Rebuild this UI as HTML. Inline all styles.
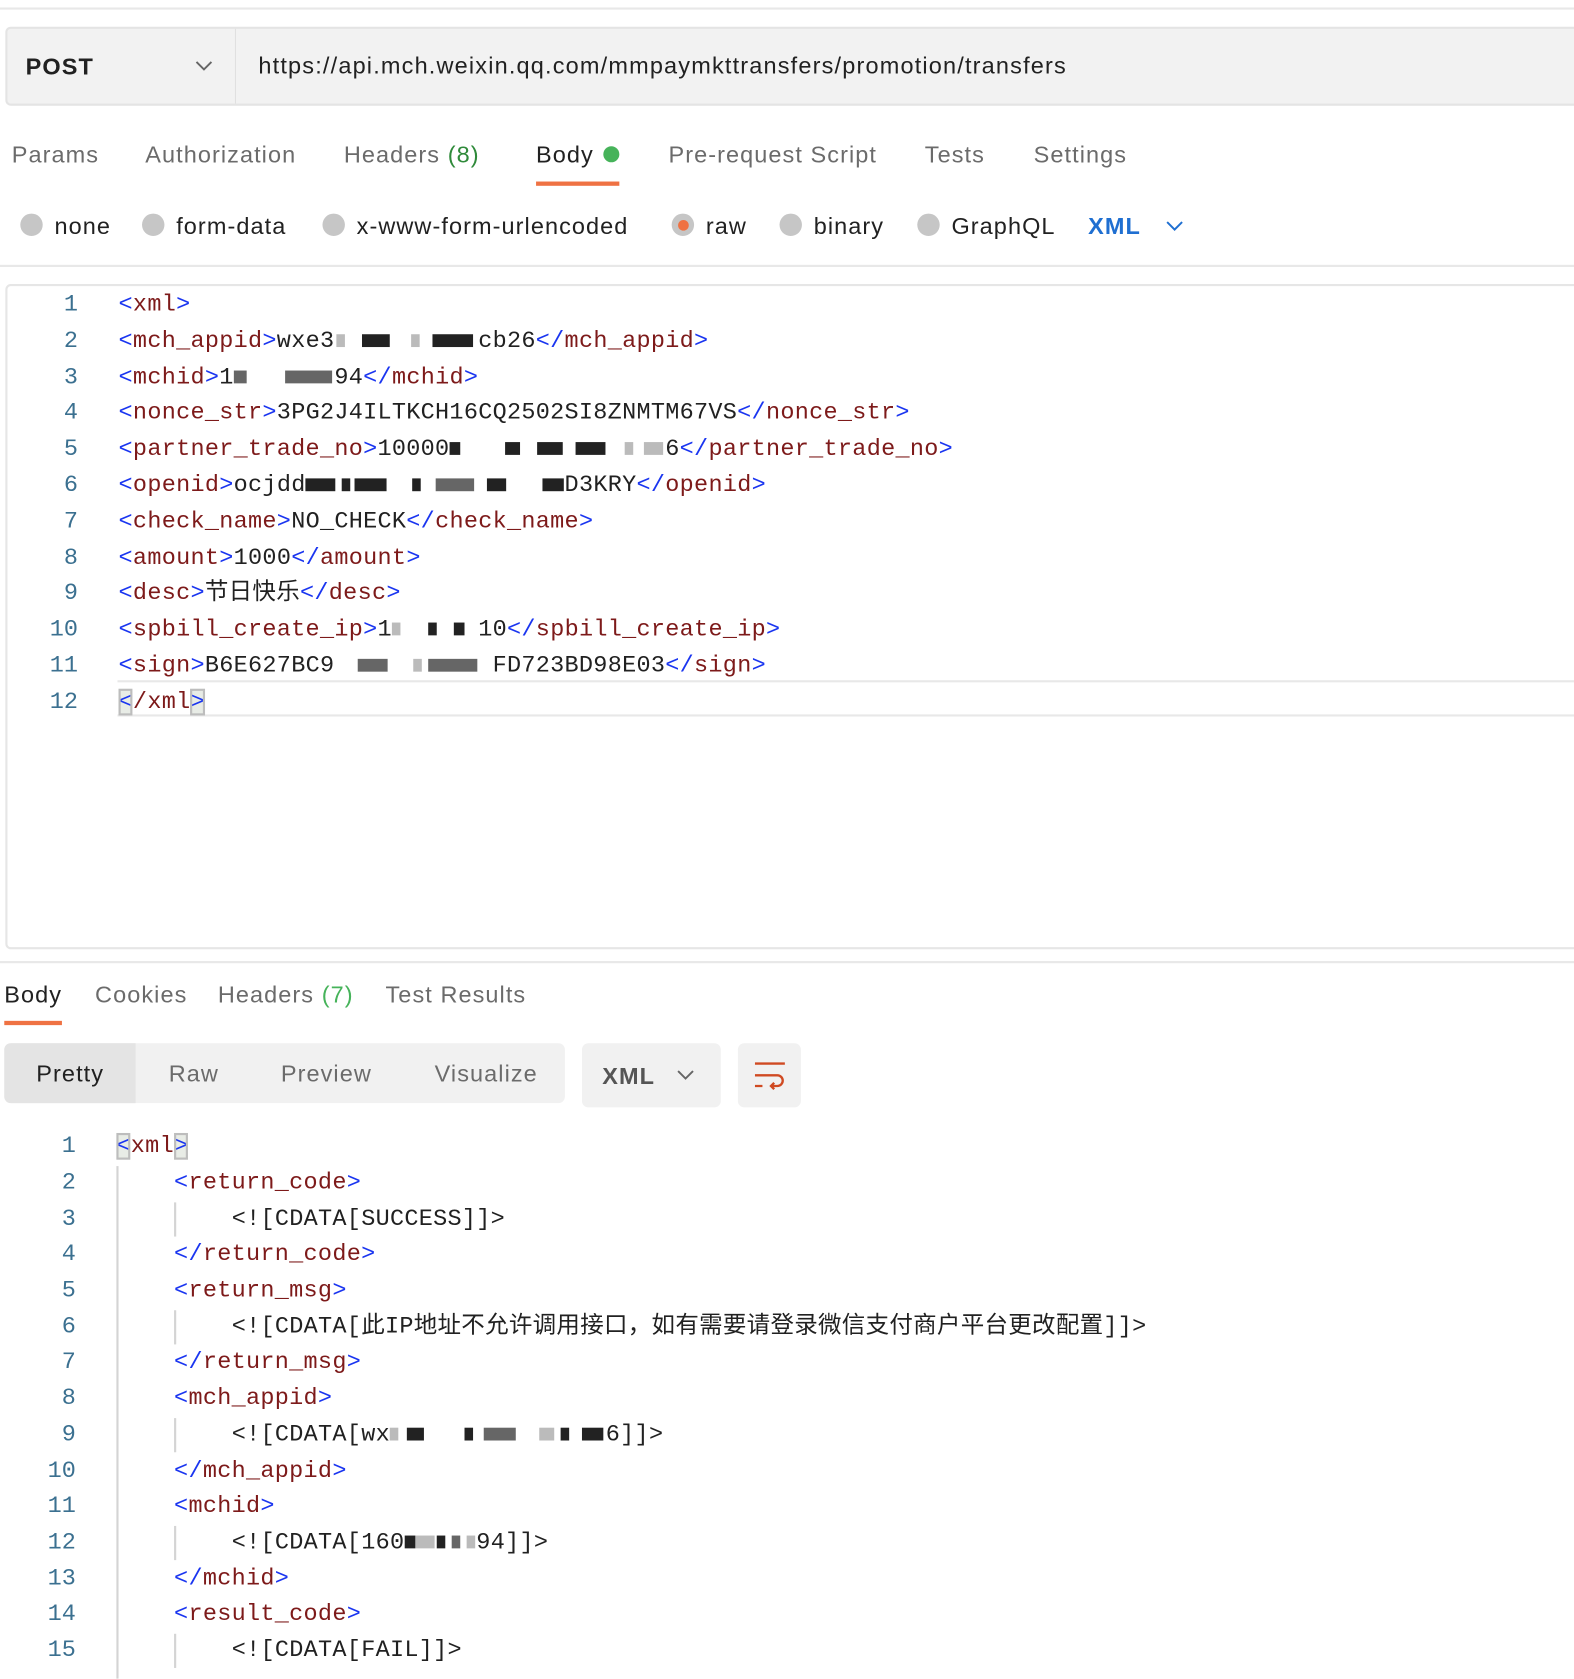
<!DOCTYPE html>
<html><head><meta charset="utf-8">
<style>
*{margin:0;padding:0;box-sizing:border-box}
html,body{width:1574px;height:1676px;overflow:hidden;background:#fff}
#w{position:absolute;left:0;top:0;width:1474px;height:1569px;transform:scale(1.06784);transform-origin:0 0;font-family:"Liberation Sans","Noto Sans CJK SC",sans-serif;color:#212121}
.a{position:absolute;white-space:nowrap}
.ui{font-size:22px;line-height:30px;letter-spacing:1px}
.g{color:#6b6b6b}
.m{font-family:"Liberation Mono","Noto Sans CJK SC",monospace;font-size:22px;line-height:34px;height:34px;letter-spacing:0.27px;white-space:pre}
.n{position:absolute;width:60px;text-align:right;color:#3b7090;font-family:"Liberation Mono",monospace;font-size:22px;line-height:34px}
.b{color:#1a35f0}.t{color:#7d1a1a}
.r{display:inline-block;width:21px;height:21px;border-radius:50%;background:#c6c6c6;position:absolute}
.q{position:relative;display:inline-block}
.q i{position:absolute;top:10px;height:12px;background:#222}
.q i.l{background:#bbb}.q i.d{background:#666}
.hl{background:#e8ece6;outline:2px solid #bdbdbd;outline-offset:-2px}
</style></head><body><div id="w">
<div class="a" style="left:0;top:7px;width:1474px;height:2px;background:#e8e8e8"></div>
<div class="a" style="left:5px;top:25px;width:1480px;height:74px;background:#f2f2f2;border:2px solid #e4e4e4;border-radius:5px"></div>
<div class="a" style="left:220px;top:27px;width:1px;height:70px;background:#e0e0e0"></div>
<div class="a ui" style="left:24px;top:48px;font-weight:bold">POST</div>
<svg class="a" style="left:182px;top:56px" width="18" height="12"><path d="M2 2 L9 9 L16 2" stroke="#666" stroke-width="1.8" fill="none"/></svg>
<div class="a ui" style="left:242px;top:47px;letter-spacing:1.1px">https://api.mch.weixin.qq.com/mmpaymkttransfers/promotion/transfers</div>

<div class="a ui g" style="left:11px;top:130px">Params</div>
<div class="a ui g" style="left:136px;top:130px">Authorization</div>
<div class="a ui g" style="left:322px;top:130px">Headers <span style="color:#2f8a3a">(8)</span></div>
<div class="a ui" style="left:502px;top:130px">Body</div>
<div class="a" style="left:565px;top:137px;width:15px;height:15px;border-radius:50%;background:#46b35a"></div>
<div class="a ui g" style="left:626px;top:130px">Pre-request Script</div>
<div class="a ui g" style="left:866px;top:130px">Tests</div>
<div class="a ui g" style="left:968px;top:130px">Settings</div>
<div class="a" style="left:502px;top:170px;width:78px;height:4px;background:#ef7243"></div>

<span class="r" style="left:19px;top:200px"></span><div class="a ui" style="left:51px;top:197px">none</div>
<span class="r" style="left:133px;top:200px"></span><div class="a ui" style="left:165px;top:197px">form-data</div>
<span class="r" style="left:302px;top:200px"></span><div class="a ui" style="left:334px;top:197px">x-www-form-urlencoded</div>
<span class="r" style="left:629px;top:200px"></span><div class="a" style="left:635px;top:206px;width:10px;height:10px;border-radius:50%;background:#ef7243"></div><div class="a ui" style="left:661px;top:197px">raw</div>
<span class="r" style="left:730px;top:200px"></span><div class="a ui" style="left:762px;top:197px">binary</div>
<span class="r" style="left:859px;top:200px"></span><div class="a ui" style="left:891px;top:197px">GraphQL</div>
<div class="a ui" style="left:1019px;top:197px;color:#1f6fd1;font-weight:bold">XML</div>
<svg class="a" style="left:1091px;top:206px" width="18" height="12"><path d="M2 2 L9 9 L16 2" stroke="#1f6fd1" stroke-width="1.8" fill="none"/></svg>
<div class="a" style="left:0;top:248px;width:1474px;height:2px;background:#e8e8e8"></div>

<div class="a" style="left:5px;top:266px;width:1480px;height:623px;border:2px solid #e6e6e6;border-radius:5px"></div>
<div class="a" style="left:110px;top:637px;width:1370px;height:34px;border-top:2px solid #e8e8e8;border-bottom:2px solid #e8e8e8"></div>

<div class="n" style="left:13px;top:269px">1</div><div class="a m" style="left:111px;top:269px"><span class="b">&lt;</span><span class="t">xml</span><span class="b">&gt;</span></div>
<div class="n" style="left:13px;top:303px">2</div><div class="a m" style="left:111px;top:303px"><span class="b">&lt;</span><span class="t">mch_appid</span><span class="b">&gt;</span>wxe3<span class="q">          <i class="l" style="left:2px;width:8px"></i><i style="left:26px;width:26px"></i><i class="l" style="left:72px;width:8px"></i><i style="left:92px;width:38px"></i></span>cb26<span class="b">&lt;/</span><span class="t">mch_appid</span><span class="b">&gt;</span></div>
<div class="n" style="left:13px;top:337px">3</div><div class="a m" style="left:111px;top:337px"><span class="b">&lt;</span><span class="t">mchid</span><span class="b">&gt;</span>1<span class="q">       <i class="d" style="left:0;width:12px"></i><i class="d" style="left:48px;width:44px"></i></span>94<span class="b">&lt;/</span><span class="t">mchid</span><span class="b">&gt;</span></div>
<div class="n" style="left:13px;top:370px">4</div><div class="a m" style="left:111px;top:370px"><span class="b">&lt;</span><span class="t">nonce_str</span><span class="b">&gt;</span>3PG2J4ILTKCH16CQ2502SI8ZNMTM67VS<span class="b">&lt;/</span><span class="t">nonce_str</span><span class="b">&gt;</span></div>
<div class="n" style="left:13px;top:404px">5</div><div class="a m" style="left:111px;top:404px"><span class="b">&lt;</span><span class="t">partner_trade_no</span><span class="b">&gt;</span>10000<span class="q">               <i style="left:0;width:10px"></i><i style="left:52px;width:14px"></i><i style="left:82px;width:24px"></i><i style="left:118px;width:28px"></i><i class="l" style="left:164px;width:8px"></i><i class="l" style="left:182px;width:18px"></i></span>6<span class="b">&lt;/</span><span class="t">partner_trade_no</span><span class="b">&gt;</span></div>
<div class="n" style="left:13px;top:438px">6</div><div class="a m" style="left:111px;top:438px"><span class="b">&lt;</span><span class="t">openid</span><span class="b">&gt;</span>ocjdd<span class="q">                  <i style="left:0;width:28px"></i><i style="left:34px;width:8px"></i><i style="left:46px;width:30px"></i><i style="left:100px;width:8px"></i><i class="d" style="left:122px;width:36px"></i><i style="left:170px;width:18px"></i><i style="left:222px;width:20px"></i></span>D3KRY<span class="b">&lt;/</span><span class="t">openid</span><span class="b">&gt;</span></div>
<div class="n" style="left:13px;top:472px">7</div><div class="a m" style="left:111px;top:472px"><span class="b">&lt;</span><span class="t">check_name</span><span class="b">&gt;</span>NO_CHECK<span class="b">&lt;/</span><span class="t">check_name</span><span class="b">&gt;</span></div>
<div class="n" style="left:13px;top:506px">8</div><div class="a m" style="left:111px;top:506px"><span class="b">&lt;</span><span class="t">amount</span><span class="b">&gt;</span>1000<span class="b">&lt;/</span><span class="t">amount</span><span class="b">&gt;</span></div>
<div class="n" style="left:13px;top:539px">9</div><div class="a m" style="left:111px;top:539px"><span class="b">&lt;</span><span class="t">desc</span><span class="b">&gt;</span>节日快乐<span class="b">&lt;/</span><span class="t">desc</span><span class="b">&gt;</span></div>
<div class="n" style="left:13px;top:573px">10</div><div class="a m" style="left:111px;top:573px"><span class="b">&lt;</span><span class="t">spbill_create_ip</span><span class="b">&gt;</span>1<span class="q">      <i class="l" style="left:0;width:8px"></i><i style="left:34px;width:8px"></i><i style="left:58px;width:10px"></i></span>10<span class="b">&lt;/</span><span class="t">spbill_create_ip</span><span class="b">&gt;</span></div>
<div class="n" style="left:13px;top:607px">11</div><div class="a m" style="left:111px;top:607px"><span class="b">&lt;</span><span class="t">sign</span><span class="b">&gt;</span>B6E627BC9<span class="q">           <i class="d" style="left:22px;width:28px"></i><i class="l" style="left:74px;width:8px"></i><i class="d" style="left:88px;width:46px"></i></span>FD723BD98E03<span class="b">&lt;/</span><span class="t">sign</span><span class="b">&gt;</span></div>
<div class="n" style="left:13px;top:641px">12</div><div class="a m" style="left:111px;top:641px"><span class="b hl">&lt;</span><span class="t">/xml</span><span class="b hl">&gt;</span></div>

<div class="a" style="left:0;top:900px;width:1474px;height:2px;background:#e8e8e8"></div>
<div class="a ui" style="left:4px;top:917px">Body</div>
<div class="a ui g" style="left:89px;top:917px">Cookies</div>
<div class="a ui g" style="left:204px;top:917px">Headers <span style="color:#46b35a">(7)</span></div>
<div class="a ui g" style="left:361px;top:917px">Test Results</div>
<div class="a" style="left:4px;top:956px;width:54px;height:4px;background:#ef7243"></div>

<div class="a" style="left:4px;top:977px;width:525px;height:56px;background:#f1f1f1;border-radius:6px"></div>
<div class="a" style="left:4px;top:977px;width:123px;height:56px;background:#e4e4e4;border-radius:6px 0 0 6px"></div>
<div class="a ui" style="left:34px;top:991px">Pretty</div>
<div class="a ui g" style="left:158px;top:991px">Raw</div>
<div class="a ui g" style="left:263px;top:991px">Preview</div>
<div class="a ui g" style="left:407px;top:991px">Visualize</div>
<div class="a" style="left:545px;top:977px;width:130px;height:60px;background:#f1f1f1;border-radius:6px"></div>
<div class="a ui" style="left:564px;top:993px;font-weight:bold;color:#555">XML</div>
<svg class="a" style="left:633px;top:1001px" width="18" height="12"><path d="M2 2 L9 9 L16 2" stroke="#666" stroke-width="1.8" fill="none"/></svg>
<div class="a" style="left:691px;top:977px;width:59px;height:60px;background:#f1f1f1;border-radius:6px"></div>
<svg class="a" style="left:704px;top:991px" width="34" height="34"><path d="M3 5 H31 M3 16 H24 a5 5 0 0 1 0 10 H18 M21 23 L18 26 L21 29 M3 26 H10" stroke="#d04a22" stroke-width="2.2" fill="none"/></svg>

<div class="a" style="left:109px;top:1092px;width:2px;height:480px;background:#d4d4d4"></div>
<div class="a" style="left:163px;top:1126px;width:2px;height:32px;background:#d4d4d4"></div>
<div class="a" style="left:163px;top:1227px;width:2px;height:32px;background:#d4d4d4"></div>
<div class="a" style="left:163px;top:1328px;width:2px;height:32px;background:#d4d4d4"></div>
<div class="a" style="left:163px;top:1429px;width:2px;height:32px;background:#d4d4d4"></div>
<div class="a" style="left:163px;top:1530px;width:2px;height:32px;background:#d4d4d4"></div>

<div class="n" style="left:11px;top:1057px">1</div><div class="a m" style="left:109px;top:1057px"><span class="b hl">&lt;</span><span class="t">xml</span><span class="b hl">&gt;</span></div>
<div class="n" style="left:11px;top:1091px">2</div><div class="a m" style="left:163px;top:1091px"><span class="b">&lt;</span><span class="t">return_code</span><span class="b">&gt;</span></div>
<div class="n" style="left:11px;top:1125px">3</div><div class="a m" style="left:217px;top:1125px">&lt;![CDATA[SUCCESS]]&gt;</div>
<div class="n" style="left:11px;top:1158px">4</div><div class="a m" style="left:163px;top:1158px"><span class="b">&lt;/</span><span class="t">return_code</span><span class="b">&gt;</span></div>
<div class="n" style="left:11px;top:1192px">5</div><div class="a m" style="left:163px;top:1192px"><span class="b">&lt;</span><span class="t">return_msg</span><span class="b">&gt;</span></div>
<div class="n" style="left:11px;top:1226px">6</div><div class="a m" style="left:217px;top:1226px">&lt;![CDATA[此IP地址不允许调用接口，如有需要请登录微信支付商户平台更改配置]]&gt;</div>
<div class="n" style="left:11px;top:1259px">7</div><div class="a m" style="left:163px;top:1259px"><span class="b">&lt;/</span><span class="t">return_msg</span><span class="b">&gt;</span></div>
<div class="n" style="left:11px;top:1293px">8</div><div class="a m" style="left:163px;top:1293px"><span class="b">&lt;</span><span class="t">mch_appid</span><span class="b">&gt;</span></div>
<div class="n" style="left:11px;top:1327px">9</div><div class="a m" style="left:217px;top:1327px">&lt;![CDATA[wx<span class="q">               <i class="l" style="left:0;width:8px"></i><i style="left:16px;width:16px"></i><i style="left:70px;width:8px"></i><i class="d" style="left:88px;width:30px"></i><i class="l" style="left:140px;width:14px"></i><i style="left:160px;width:8px"></i><i style="left:180px;width:20px"></i></span>6]]&gt;</div>
<div class="n" style="left:11px;top:1361px">10</div><div class="a m" style="left:163px;top:1361px"><span class="b">&lt;/</span><span class="t">mch_appid</span><span class="b">&gt;</span></div>
<div class="n" style="left:11px;top:1394px">11</div><div class="a m" style="left:163px;top:1394px"><span class="b">&lt;</span><span class="t">mchid</span><span class="b">&gt;</span></div>
<div class="n" style="left:11px;top:1428px">12</div><div class="a m" style="left:217px;top:1428px">&lt;![CDATA[160<span class="q">     <i style="left:0;width:10px"></i><i class="l" style="left:10px;width:18px"></i><i style="left:30px;width:8px"></i><i class="d" style="left:44px;width:8px"></i><i class="l" style="left:58px;width:8px"></i></span>94]]&gt;</div>
<div class="n" style="left:11px;top:1462px">13</div><div class="a m" style="left:163px;top:1462px"><span class="b">&lt;/</span><span class="t">mchid</span><span class="b">&gt;</span></div>
<div class="n" style="left:11px;top:1495px">14</div><div class="a m" style="left:163px;top:1495px"><span class="b">&lt;</span><span class="t">result_code</span><span class="b">&gt;</span></div>
<div class="n" style="left:11px;top:1529px">15</div><div class="a m" style="left:217px;top:1529px">&lt;![CDATA[FAIL]]&gt;</div>
</div></body></html>
